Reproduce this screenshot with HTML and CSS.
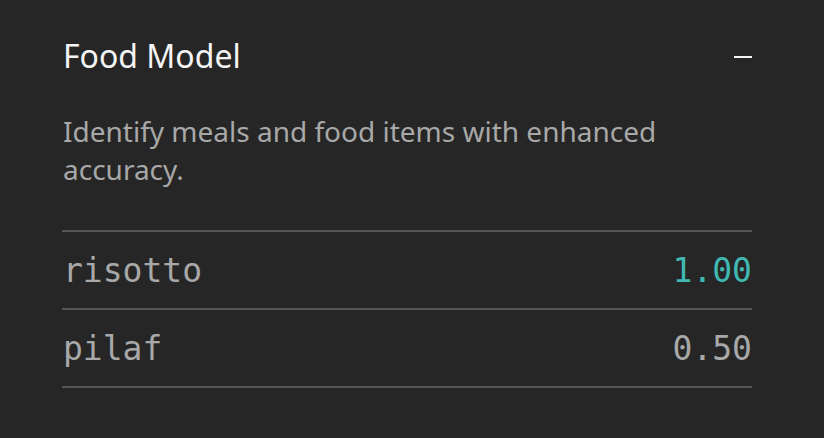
FILE: index.html
```html
<!DOCTYPE html>
<html>
<head>
<meta charset="utf-8">
<link rel="stylesheet" href="styles.css">
</head>
<body>
<section class="card">
  <header class="card-header">
    <h2 class="card-title">Food Model</h2>
    <span class="collapse" aria-label="Collapse"></span>
  </header>
  <p class="card-desc">Identify meals and food items with enhanced accuracy.</p>
  <ul class="results">
    <li class="row"><span class="label">risotto</span><span class="score score-high">1.00</span></li>
    <li class="row"><span class="label">pilaf</span><span class="score">0.50</span></li>
  </ul>
</section>
</body>
</html>
```
FILE: styles.css
```css
html, body {
  margin: 0;
  padding: 0;
  background: #262626;
}
body {
  width: 824px;
  height: 438px;
  overflow: hidden;
}
.card {
  padding: 36px 72px 0 63px;
}
.card-header {
  display: flex;
  justify-content: space-between;
  align-items: center;
  height: 40px;
}
.card-title {
  margin: 0;
  font-family: "Noto Sans", sans-serif;
  font-weight: 400;
  font-size: 32px;
  line-height: 40px;
  color: #f4f4f4;
}
.collapse {
  display: block;
  width: 18px;
  height: 2px;
  background: #f4f4f4;
  margin-top: 2px;
}
.card-desc {
  margin: 36px 0 0 0;
  width: 640px;
  font-family: "Noto Sans", sans-serif;
  font-size: 28px;
  line-height: 38px;
  color: #a8a8a8;
}
.results {
  list-style: none;
  margin: 42px 0 0 -1px;
  padding: 0;
  border-top: 2px solid #565656;
}
.row {
  display: flex;
  justify-content: space-between;
  align-items: center;
  height: 76px;
  border-bottom: 2px solid #565656;
  padding-left: 1px;
  font-family: "DejaVu Sans Mono", monospace;
  font-size: 33px;
  color: #a8a8a8;
}
.score-high {
  color: #41b8b2;
}
```
